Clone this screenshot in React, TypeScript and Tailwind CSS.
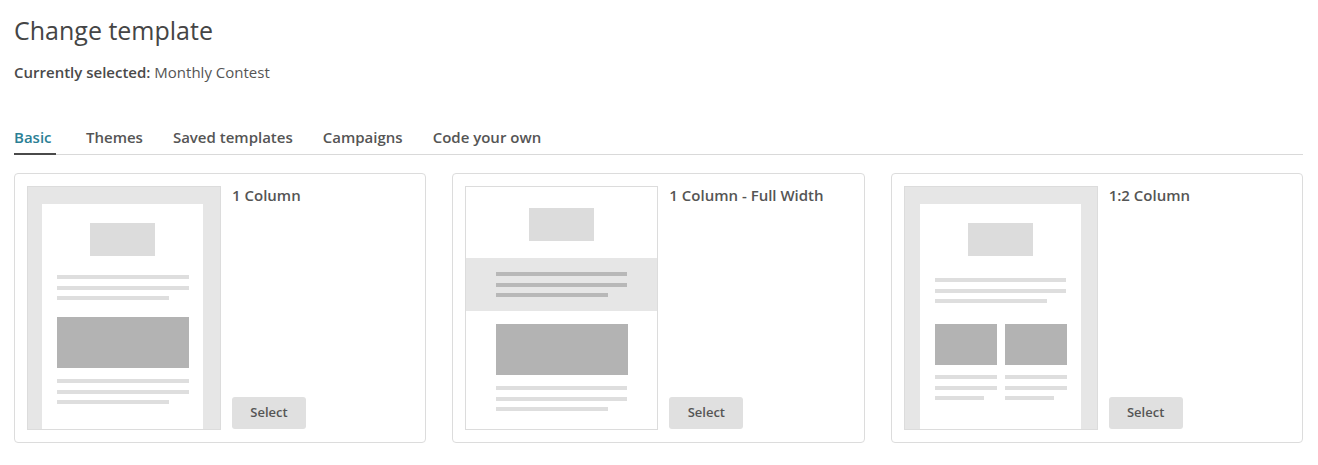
import React from "react";

function Thumb1() {
  return (
    <div className="w-[194px] h-[244px] shrink-0 bg-[#e6e6e6] border border-[#dcdcdc] flex pl-[14px] pt-[17px]">
      <div className="w-[161px] bg-white flex flex-col items-center pt-[19px]">
        <div className="w-[65px] h-[33px] bg-[#dcdcdc]" />
        <div className="w-[132px] mt-[19px] flex flex-col gap-[6.5px]">
          <div className="h-[4px] w-[132px] bg-[#dedede]" />
          <div className="h-[4px] w-[132px] bg-[#dedede]" />
          <div className="h-[4px] w-[112px] bg-[#dedede]" />
        </div>
        <div className="w-[132px] h-[51px] mt-[17px] bg-[#b3b3b3]" />
        <div className="w-[132px] mt-[11px] flex flex-col gap-[6.5px]">
          <div className="h-[4px] w-[132px] bg-[#dedede]" />
          <div className="h-[4px] w-[132px] bg-[#dedede]" />
          <div className="h-[4px] w-[112px] bg-[#dedede]" />
        </div>
      </div>
    </div>
  );
}

function Thumb2() {
  return (
    <div className="w-[193px] h-[244px] shrink-0 bg-white border border-[#dcdcdc] flex flex-col items-center pt-[21px]">
      <div className="w-[65px] h-[33px] bg-[#dcdcdc]" />
      <div className="w-full h-[53px] mt-[17px] bg-[#e6e6e6] flex flex-col items-center pt-[14px]">
        <div className="w-[131px] flex flex-col gap-[6.5px]">
          <div className="h-[4px] w-[131px] bg-[#b8b8b8]" />
          <div className="h-[4px] w-[131px] bg-[#b8b8b8]" />
          <div className="h-[4px] w-[112px] bg-[#b8b8b8]" />
        </div>
      </div>
      <div className="w-[132px] h-[51px] mt-[13px] bg-[#b3b3b3]" />
      <div className="w-[131px] mt-[11px] flex flex-col gap-[6.5px]">
        <div className="h-[4px] w-[131px] bg-[#dedede]" />
        <div className="h-[4px] w-[131px] bg-[#dedede]" />
        <div className="h-[4px] w-[112px] bg-[#dedede]" />
      </div>
    </div>
  );
}

function Thumb3() {
  return (
    <div className="w-[194px] h-[244px] shrink-0 bg-[#e6e6e6] border border-[#dcdcdc] flex pl-[15px] pt-[17px]">
      <div className="w-[161px] bg-white flex flex-col items-center pt-[19px]">
        <div className="w-[65px] h-[33px] bg-[#dcdcdc]" />
        <div className="w-[131px] mt-[22px] flex flex-col gap-[6.5px]">
          <div className="h-[4px] w-[131px] bg-[#dedede]" />
          <div className="h-[4px] w-[131px] bg-[#dedede]" />
          <div className="h-[4px] w-[112px] bg-[#dedede]" />
        </div>
        <div className="w-[131px] mt-[21px] flex gap-[8px]">
          {[0, 1].map((i) => (
            <div key={i} className="w-[62px] flex flex-col">
              <div className="w-[62px] h-[41px] bg-[#b3b3b3]" />
              <div className="mt-[10px] flex flex-col gap-[6.5px]">
                <div className="h-[4px] w-[62px] bg-[#dedede]" />
                <div className="h-[4px] w-[62px] bg-[#dedede]" />
                <div className="h-[4px] w-[49px] bg-[#dedede]" />
              </div>
            </div>
          ))}
        </div>
      </div>
    </div>
  );
}

function Card({ title, thumb }: { title: string; thumb: React.ReactNode }) {
  return (
    <div className="border border-[#dcdcdc] rounded-[4px] p-[12px] flex gap-[11px] bg-white">
      {thumb}
      <div className="flex flex-col justify-between pb-[1px]">
        <div className="text-[15px] leading-[18px] font-semibold text-[#555555]">{title}</div>
        <button className="w-[74px] h-[32px] rounded-[3px] bg-[#e0e0e0] text-[13px] font-semibold text-[#555555]">
          Select
        </button>
      </div>
    </div>
  );
}

export default function App() {
  const tabs = ["Basic", "Themes", "Saved templates", "Campaigns", "Code your own"];
  return (
    <div
      className="w-[1318px] h-[465px] bg-white pl-[14px] pr-[15px] pt-[14px]"
      style={{ fontFamily: '"Open Sans", "Noto Sans", sans-serif' }}
    >
      <h1 className="text-[25px] leading-[32px] text-[#454545] font-normal">Change template</h1>
      <p className="mt-[16px] text-[15px] leading-[20px] text-[#555]">
        <span className="font-semibold text-[#4a4a4a]">Currently selected:</span> Monthly Contest
      </p>
      <div className="mt-[45px] flex gap-[30px] border-b border-[#d9d9d9]">
        {tabs.map((t, i) => (
          <div
            key={t}
            className={
              i === 0
                ? "w-[42px] text-[15px] leading-[20px] font-semibold text-[#2b7f95] pb-[6px] border-b-2 border-[#4a4a4a] mb-[-1px]"
                : "text-[15px] leading-[20px] font-semibold text-[#555555] pb-[6px]"
            }
          >
            {t}
          </div>
        ))}
      </div>
      <div className="mt-[18px] grid grid-cols-3 gap-[26px]">
        <Card title="1 Column" thumb={<Thumb1 />} />
        <Card title="1 Column - Full Width" thumb={<Thumb2 />} />
        <Card title="1:2 Column" thumb={<Thumb3 />} />
      </div>
    </div>
  );
}
